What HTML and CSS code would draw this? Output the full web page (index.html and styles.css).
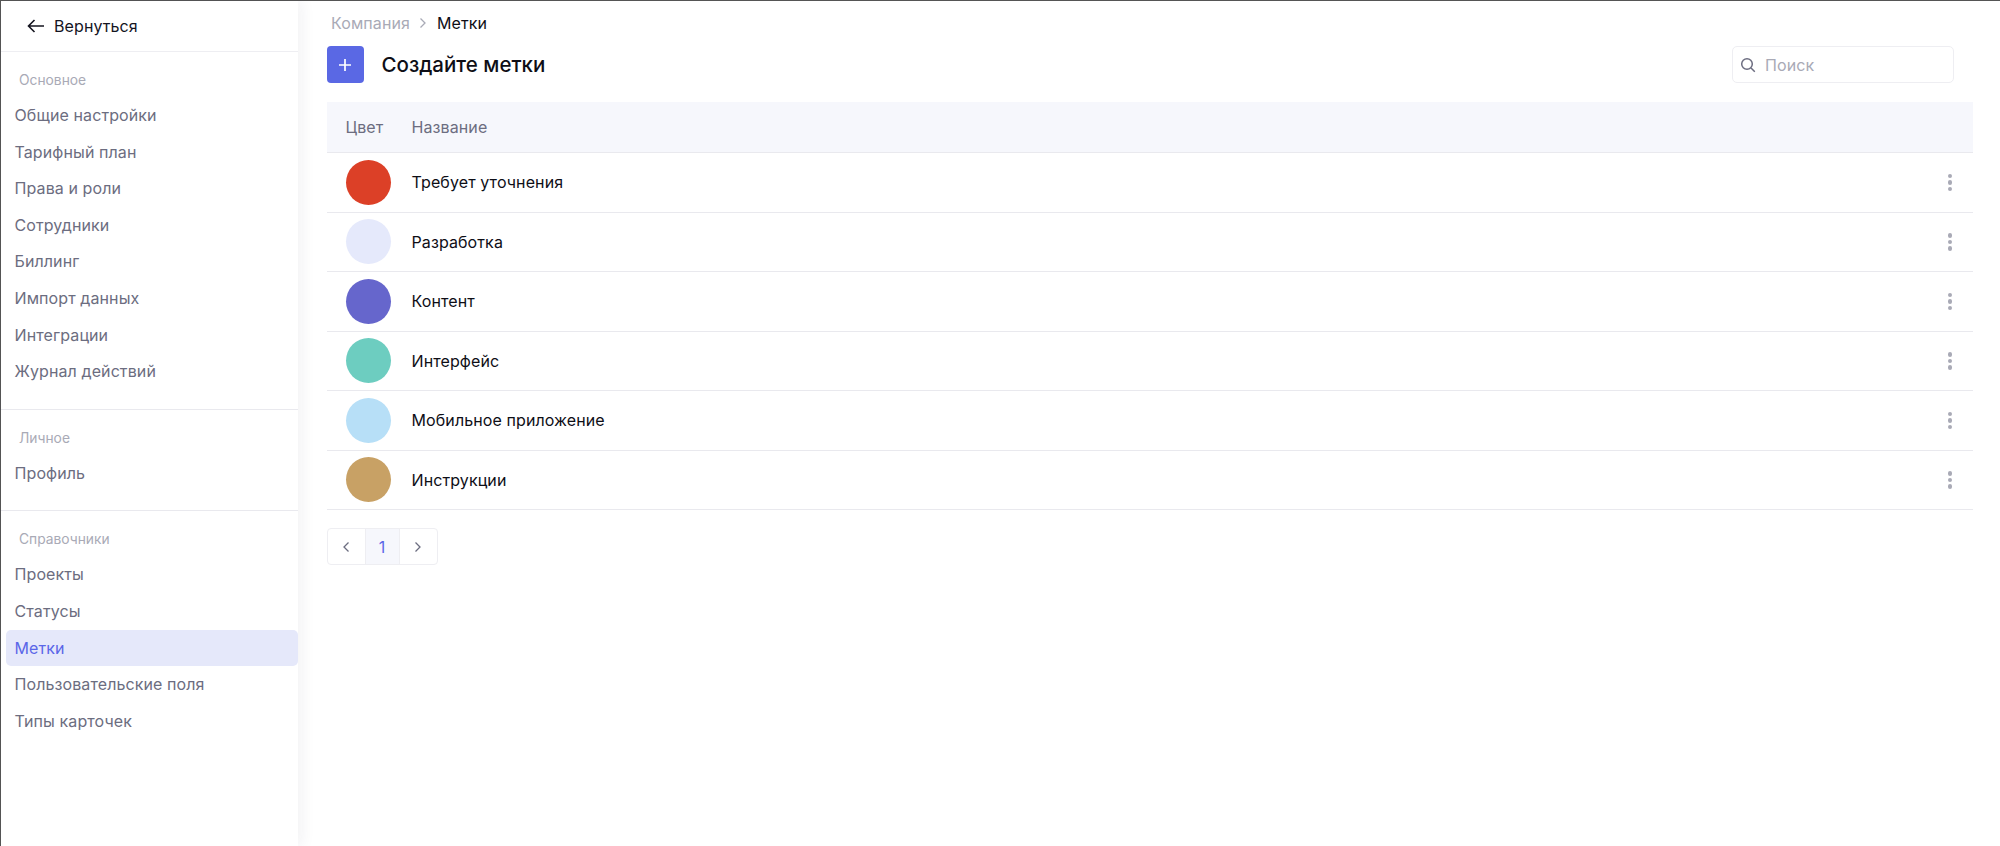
FILE: index.html
```html
<!doctype html>
<html lang="ru">
<head>
  <meta charset="UTF-8">
  <title>Метки</title>
  <link rel="stylesheet" href="styles.css">
</head>
<body>
  <div class="app">
    <aside class="sidebar">
      <div class="back">
        <svg class="back-icon" width="18" height="14" viewBox="0 0 18 14" fill="none" stroke="#14141f" stroke-width="1.6">
          <path d="M17 7H1.5M7.5 1 1.5 7l6 6"/>
        </svg>
        <span>Вернуться</span>
      </div>

      <div class="section">
        <div class="section-title">Основное</div>
        <a class="item">Общие настройки</a>
        <a class="item">Тарифный план</a>
        <a class="item">Права и роли</a>
        <a class="item">Сотрудники</a>
        <a class="item">Биллинг</a>
        <a class="item">Импорт данных</a>
        <a class="item">Интеграции</a>
        <a class="item">Журнал действий</a>
      </div>
      <div class="section">
        <div class="section-title">Личное</div>
        <a class="item">Профиль</a>
      </div>
      <div class="section last">
        <div class="section-title">Справочники</div>
        <a class="item">Проекты</a>
        <a class="item">Статусы</a>
        <a class="item active">Метки</a>
        <a class="item">Пользовательские поля</a>
        <a class="item">Типы карточек</a>
      </div>
    </aside>

    <main class="content">
      <div class="crumbs">
        <span class="crumb-parent">Компания</span>
        <svg class="crumb-sep" width="8" height="12" viewBox="0 0 8 12" fill="none" stroke="#a9aab6" stroke-width="1.3">
          <path d="M1.5 1.5 6 6l-4.500 4.500"/>
        </svg>
        <span class="crumb-current">Метки</span>
      </div>

      <div class="toolbar">
        <button class="add-btn">
          <svg width="14" height="14" viewBox="0 0 14 14" stroke="#fff" stroke-width="1.7">
            <path d="M7 1v12M1 7h12"/>
          </svg>
        </button>
        <h1 class="title">Создайте метки</h1>
        <div class="search">
          <svg width="16" height="16" viewBox="0 0 16 16" fill="none" stroke="#6c6d80" stroke-width="1.5">
            <circle cx="7" cy="7" r="5.300"/>
            <path d="m11 11 3.800 3.800"/>
          </svg>
          <span class="search-text">Поиск</span>
        </div>
      </div>

      <div class="table">
        <div class="row head">
          <div class="col-color">Цвет</div>
          <div class="col-name">Название</div>
        </div>
        <div class="row">
          <div class="col-color"><span class="dot red"></span></div>
          <div class="col-name">Требует уточнения</div>
          <div class="more"><i></i><i></i><i></i></div>
        </div>
        <div class="row">
          <div class="col-color"><span class="dot lavender"></span></div>
          <div class="col-name">Разработка</div>
          <div class="more"><i></i><i></i><i></i></div>
        </div>
        <div class="row">
          <div class="col-color"><span class="dot indigo"></span></div>
          <div class="col-name">Контент</div>
          <div class="more"><i></i><i></i><i></i></div>
        </div>
        <div class="row">
          <div class="col-color"><span class="dot teal"></span></div>
          <div class="col-name">Интерфейс</div>
          <div class="more"><i></i><i></i><i></i></div>
        </div>
        <div class="row">
          <div class="col-color"><span class="dot sky"></span></div>
          <div class="col-name">Мобильное приложение</div>
          <div class="more"><i></i><i></i><i></i></div>
        </div>
        <div class="row">
          <div class="col-color"><span class="dot sand"></span></div>
          <div class="col-name">Инструкции</div>
          <div class="more"><i></i><i></i><i></i></div>
        </div>
      </div>

      <div class="pager">
        <div class="pager-arrow prev">
          <svg width="8" height="12" viewBox="0 0 8 12" fill="none" stroke="#6c6d80" stroke-width="1.3">
            <path d="M6.500 1.500 2 6l4.500 4.500"/>
          </svg>
        </div>
        <div class="pager-num">1</div>
        <div class="pager-arrow next">
          <svg width="8" height="12" viewBox="0 0 8 12" fill="none" stroke="#6c6d80" stroke-width="1.3">
            <path d="M1.500 1.500 6 6l-4.500 4.500"/>
          </svg>
        </div>
      </div>
    </main>
  </div>
</body>
</html>
```

FILE: styles.css
```css
html, body {
  margin: 0;
  padding: 0;
  height: 100%;
  background: #fff;
}
body {
  font-family: Inter, "Noto Sans", sans-serif;
  font-size: 16px;
  letter-spacing: 0.1px;
  color: #14141f;
  overflow: hidden;
}
.app {
  display: flex;
  height: 100vh;
  box-sizing: border-box;
  border-top: 1px solid #555;
  border-left: 1px solid #555;
}

/* sidebar */
.sidebar {
  width: 297px;
  flex: none;
  box-shadow: 4px 0 14px rgba(30, 30, 60, 0.06);
}
.back {
  display: flex;
  align-items: center;
  gap: 9px;
  height: 50px;
  padding-left: 26px;
  border-bottom: 1px solid #eeeef2;
}
.section {
  padding: 16px 0 19px;
  border-bottom: 1px solid #e9e9ee;
}
.section.last {
  border-bottom: none;
}
.section-title {
  height: 24px;
  line-height: 24px;
  margin-bottom: 5px;
  padding-left: 18px;
  font-size: 13.800px;
  letter-spacing: 0;
  color: #a9aab6;
}
.item {
  display: block;
  height: 36.600px;
  line-height: 36.600px;
  margin-left: 5px;
  padding-left: 8.500px;
  color: #6c6d80;
  border-radius: 5px;
}
.item.active {
  background: #e5e8fa;
  color: #5a66e8;
}

/* main */
.content {
  flex: 1;
  min-width: 0;
  padding: 0 27px 0 28.500px;
}
.crumbs {
  display: flex;
  align-items: center;
  height: 44px;
  padding-bottom: 1px;
  padding-left: 4.500px;
}
.crumb-parent {
  color: #a9aab6;
}
.crumb-sep {
  margin: 0 10px 0 9px;
}
.crumb-current {
  color: #0e0e16;
}
.toolbar {
  display: flex;
  align-items: center;
  height: 37px;
}
.add-btn {
  display: flex;
  align-items: center;
  justify-content: center;
  width: 37px;
  height: 37px;
  padding: 0;
  border: none;
  border-radius: 4px;
  background: #5a68e4;
}
.title {
  margin: 0 0 0 18px;
  font-size: 20.500px;
  font-weight: 500;
  letter-spacing: 0;
  color: #0e0e16;
}
.search {
  display: flex;
  align-items: center;
  gap: 9px;
  width: 222px;
  height: 37px;
  box-sizing: border-box;
  margin-left: auto;
  margin-right: 19px;
  padding-left: 7px;
  border: 1px solid #eeeef2;
  border-radius: 5px;
}
.search-text {
  color: #a9aab6;
}

/* table */
.table {
  margin-top: 19px;
}
.row {
  display: flex;
  align-items: center;
  height: 59.500px;
  box-sizing: border-box;
  border-bottom: 1px solid #e9e9ee;
  color: #0e0e16;
}
.row.head {
  height: 51px;
  background: #f6f7fc;
  color: #6c6d80;
}
.col-color {
  display: flex;
  align-items: center;
  width: 85px;
  flex: none;
  padding-left: 19px;
  box-sizing: border-box;
}
.col-name {
  flex: 1;
}
.dot {
  display: block;
  width: 45px;
  height: 45px;
  border-radius: 50%;
}
.red { background: #dc4027; }
.lavender { background: #e5e9fb; }
.indigo { background: #6666cc; }
.teal { background: #6dcdc0; }
.sky { background: #b7dff7; }
.sand { background: #c8a165; }
.more {
  display: flex;
  flex-direction: column;
  gap: 2px;
  margin-right: 21px;
}
.more i {
  display: block;
  width: 4.500px;
  height: 4.500px;
  border-radius: 50%;
  background: #a9aab6;
}

/* pagination */
.pager {
  display: inline-flex;
  height: 37px;
  box-sizing: border-box;
  margin-top: 18px;
  border: 1px solid #eeeef2;
  border-radius: 4px;
}
.pager-arrow {
  display: flex;
  align-items: center;
  justify-content: center;
  width: 37px;
}
.pager-arrow.next {
  width: 37px;
}
.pager-num {
  display: flex;
  align-items: center;
  justify-content: center;
  width: 33px;
  background: #f6f7fc;
  color: #5a66e8;
  border-left: 1px solid #eeeef2;
  border-right: 1px solid #eeeef2;
}
```
